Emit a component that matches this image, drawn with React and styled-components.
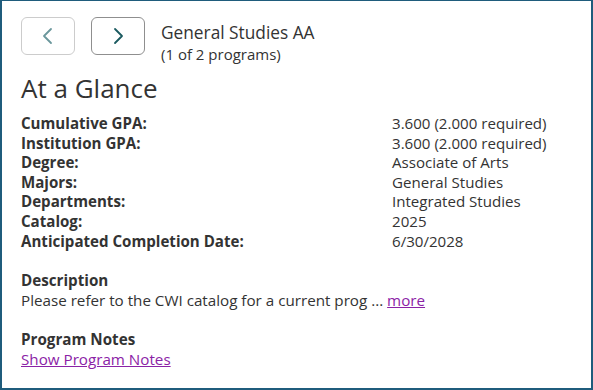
import React from "react";
import styled, { createGlobalStyle } from "styled-components";

const Global = createGlobalStyle`
  html, body {
    margin: 0;
    padding: 0;
    background: #fff;
  }
  * {
    box-sizing: border-box;
  }
`;

const Panel = styled.div`
  width: 593px;
  height: 390px;
  border: 2px solid #1f5c7c;
  border-top-width: 1px;
  padding: 16px 19px 0 19px;
  font-family: "Open Sans", "Liberation Sans", sans-serif;
  color: #333;
  background: #fff;
`;

const Header = styled.div`
  display: flex;
  align-items: flex-start;
`;

const NavButton = styled.button`
  width: 54px;
  height: 38px;
  margin-right: 16px;
  border: 1px solid ${(p) => (p.disabled ? "#cccccc" : "#8f8f8f")};
  border-radius: 6px;
  background: #fff;
  display: flex;
  align-items: center;
  justify-content: center;
  padding: 0;
  cursor: ${(p) => (p.disabled ? "default" : "pointer")};
  color: ${(p) => (p.disabled ? "#6a979c" : "#1b5a60")};
`;

const ProgramInfo = styled.div`
  margin-top: 5px;
  display: flex;
  flex-direction: column;
`;

const ProgramName = styled.div`
  font-size: 17.3px;
  line-height: 22px;
`;

const ProgramCount = styled.div`
  font-size: 15px;
  line-height: 20px;
`;

const Heading = styled.h2`
  margin: 7px 0 9px;
  font-size: 26px;
  font-weight: 400;
  line-height: 34px;
`;

const Details = styled.div`
  display: grid;
  grid-template-columns: 371px 1fr;
  font-size: 15.1px;
  line-height: 19.6px;
`;

const Label = styled.div`
  font-weight: 700;
`;

const Value = styled.div``;

const Section = styled.div`
  margin-top: 20px;
  font-size: 15.2px;
  line-height: 19.6px;
`;

const SectionTitle = styled.div`
  font-weight: 700;
`;

const Link = styled.a`
  color: #8b22a6;
  text-decoration: underline;
  cursor: pointer;
`;

const Chevron = ({ dir }) => (
  <svg width="14" height="20" viewBox="0 0 14 20" fill="none">
    <path
      d={dir === "left" ? "M10 3 L3 10 L10 17" : "M4 3 L11 10 L4 17"}
      stroke="currentColor"
      strokeWidth="1.8"
      strokeLinecap="round"
      strokeLinejoin="round"
    />
  </svg>
);

const rows = [
  ["Cumulative GPA:", "3.600 (2.000 required)"],
  ["Institution GPA:", "3.600 (2.000 required)"],
  ["Degree:", "Associate of Arts"],
  ["Majors:", "General Studies"],
  ["Departments:", "Integrated Studies"],
  ["Catalog:", "2025"],
  ["Anticipated Completion Date:", "6/30/2028"],
];

export default function App() {
  return (
    <>
      <Global />
      <Panel>
        <Header>
          <NavButton disabled aria-label="Previous program">
            <Chevron dir="left" />
          </NavButton>
          <NavButton aria-label="Next program">
            <Chevron dir="right" />
          </NavButton>
          <ProgramInfo>
            <ProgramName>General Studies AA</ProgramName>
            <ProgramCount>(1 of 2 programs)</ProgramCount>
          </ProgramInfo>
        </Header>
        <Heading>At a Glance</Heading>
        <Details>
          {rows.map(([label, value]) => (
            <React.Fragment key={label}>
              <Label>{label}</Label>
              <Value>{value}</Value>
            </React.Fragment>
          ))}
        </Details>
        <Section>
          <SectionTitle>Description</SectionTitle>
          <div>
            Please refer to the CWI catalog for a current prog ... <Link>more</Link>
          </div>
        </Section>
        <Section>
          <SectionTitle>Program Notes</SectionTitle>
          <Link>Show Program Notes</Link>
        </Section>
      </Panel>
    </>
  );
}
